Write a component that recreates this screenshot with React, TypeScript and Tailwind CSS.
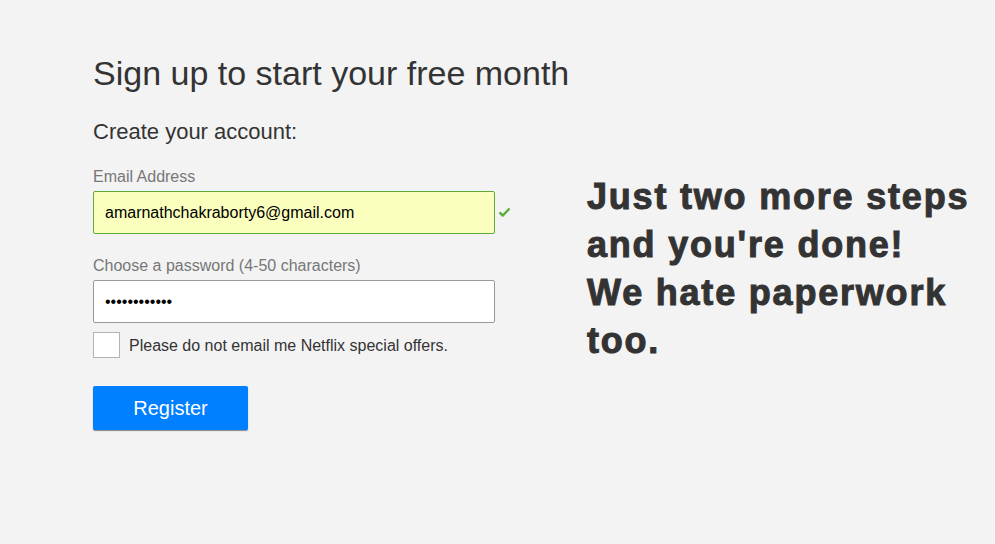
import React from 'react';

const font = { fontFamily: '"Liberation Sans", Arial, sans-serif' };

export default function App() {
  return (
    <div className="min-h-screen bg-[#f3f3f3] text-[#333]" style={font}>
      <div className="flex pl-[93px] pt-[53px]">
        {/* Left: form */}
        <div className="w-[494px] shrink-0">
          <h1 className="text-[34px] leading-[40px] font-normal">Sign up to start your free month</h1>
          <h2 className="mt-[26px] text-[22px] leading-[26px] font-normal">Create your account:</h2>

          <label className="mt-[22px] block text-[16px] leading-[20px] text-[#777]">Email Address</label>
          <div className="mt-[4px] flex items-center">
            <input
              readOnly
              value="amarnathchakraborty6@gmail.com"
              className="h-[43px] w-[402px] rounded-[2px] border border-[#5fa83a] bg-[#faffbd] px-[11px] text-[16px] text-black outline-none"
              style={font}
            />
            <svg className="ml-[3px] mt-[-2px]" width="13" height="10" viewBox="0 0 13 10">
              <path d="M1.5 5.5 L4.8 8.5 L11.5 1.5" fill="none" stroke="#5cb039" strokeWidth="2.4" />
            </svg>
          </div>

          <label className="mt-[22px] block text-[16px] leading-[20px] text-[#777]">
            Choose a password (4-50 characters)
          </label>
          <input
            readOnly
            type="password"
            value="amarnath1234"
            className="mt-[4px] block h-[43px] w-[402px] rounded-[2px] border border-[#999] bg-white px-[11px] text-[16px] text-black outline-none"
            style={font}
          />

          <div className="mt-[9px] flex items-start">
            <span className="h-[26px] w-[27px] border border-[#b3b3b3] bg-white" />
            <span className="ml-[9px] text-[16px] leading-[27px]">Please do not email me Netflix special offers.</span>
          </div>

          <button className="mt-[27px] h-[44px] w-[155px] rounded-[2px] bg-[#0080ff] text-[20px] text-white shadow-[0_1px_1px_rgba(0,0,0,0.45)]">
            Register
          </button>
        </div>

        {/* Right: message */}
        <div className="pt-[120px] text-[36px] font-bold leading-[48px] tracking-[1.8px] text-[#333] [-webkit-text-stroke:1px_#333]">
          Just two more steps and you're done!
          <br />
          We hate paperwork too.
        </div>
      </div>
    </div>
  );
}
